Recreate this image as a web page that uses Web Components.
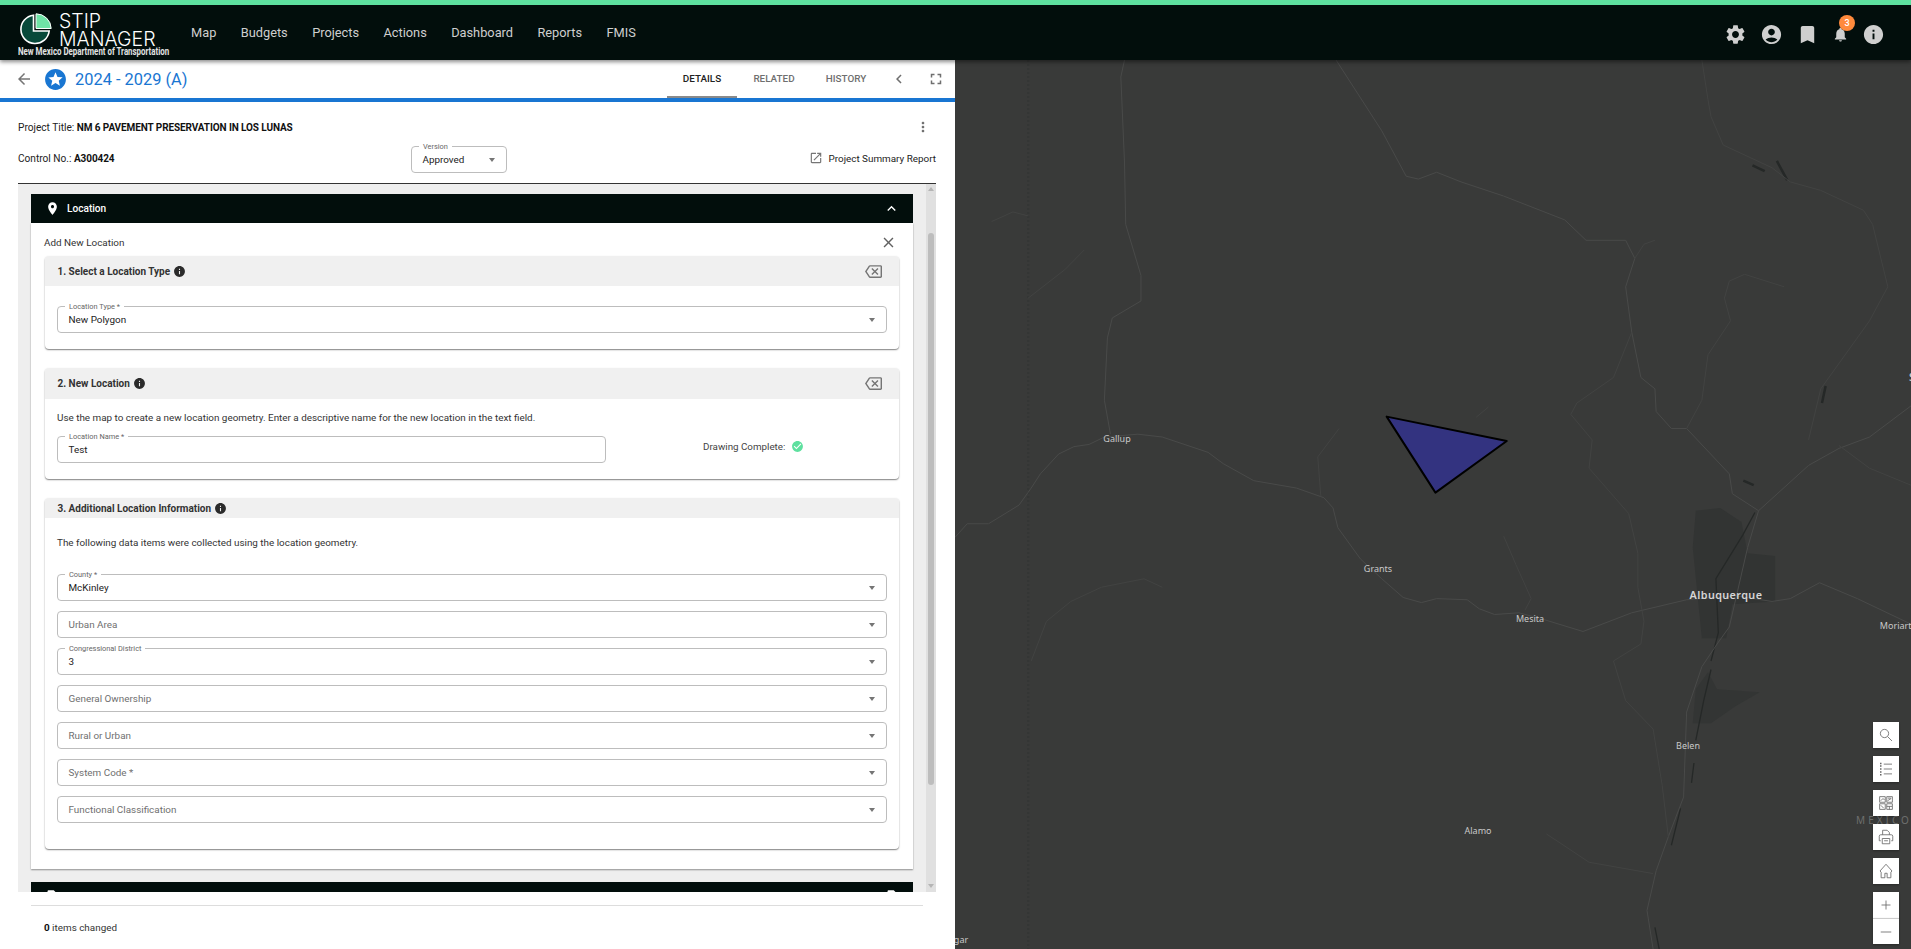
<!DOCTYPE html>
<html>
<head>
<meta charset="utf-8">
<title>STIP Manager</title>
<style>
  html, body { margin: 0; height: 949px; overflow: hidden; background: #fff; }
  body { display: flex; flex-direction: column; font-family: Roboto, "Liberation Sans", sans-serif; }
  .main { display: flex; height: 889px; }
</style>
</head>
<body>
<stip-header></stip-header>
<div class="main">
  <project-panel></project-panel>
  <map-view></map-view>
</div>
<script>
const ICONS = {
  settings: "M19.14 12.94c.04-.3.06-.61.06-.94 0-.32-.02-.64-.07-.94l2.03-1.58c.18-.14.23-.41.12-.61l-1.92-3.32c-.12-.22-.37-.29-.59-.22l-2.39.96c-.5-.38-1.03-.7-1.62-.94l-.36-2.54c-.04-.24-.24-.41-.48-.41h-3.84c-.24 0-.43.17-.47.41l-.36 2.54c-.59.24-1.13.57-1.62.94l-2.39-.96c-.22-.08-.47 0-.59.22L2.74 8.87c-.12.21-.08.47.12.61l2.03 1.58c-.05.3-.09.63-.09.94s.02.64.07.94l-2.03 1.58c-.18.14-.23.41-.12.61l1.92 3.32c.12.22.37.29.59.22l2.39-.96c.5.38 1.03.7 1.62.94l.36 2.54c.05.24.24.41.48.41h3.84c.24 0 .44-.17.47-.41l.36-2.54c.59-.24 1.13-.56 1.62-.94l2.39.96c.22.08.47 0 .59-.22l1.92-3.32c.12-.22.07-.47-.12-.61l-2.01-1.58zM12 15.6c-1.98 0-3.6-1.62-3.6-3.6s1.62-3.6 3.6-3.6 3.6 1.62 3.6 3.6-1.62 3.6-3.6 3.6z",
  account: "M12 2C6.48 2 2 6.48 2 12s4.48 10 10 10 10-4.48 10-10S17.52 2 12 2zm0 4c1.93 0 3.5 1.57 3.5 3.5S13.93 13 12 13s-3.5-1.57-3.5-3.5S10.07 6 12 6zm0 14c-2.03 0-4.43-.82-6.14-2.88C7.55 15.8 9.68 15 12 15s4.45.8 6.14 2.12C16.43 19.18 14.03 20 12 20z",
  bookmark: "M17 3H7c-1.1 0-2 .9-2 2v16l7-3 7 3V5c0-1.1-.9-2-2-2z",
  bell: "M12 22c1.1 0 2-.9 2-2h-4c0 1.1.89 2 2 2zm6-6v-5c0-3.07-1.64-5.64-4.5-6.32V4c0-.83-.67-1.5-1.5-1.5s-1.5.67-1.5 1.5v.68C7.63 5.36 6 7.92 6 11v5l-2 2v1h16v-1l-2-2z",
  info: "M12 2C6.48 2 2 6.48 2 12s4.48 10 10 10 10-4.48 10-10S17.52 2 12 2zm1 15h-2v-6h2v6zm0-8h-2V7h2v2z",
  place: "M12 2C8.13 2 5 5.13 5 9c0 5.25 7 13 7 13s7-7.75 7-13c0-3.87-3.13-7-7-7zm0 9.5c-1.38 0-2.5-1.12-2.5-2.5s1.12-2.5 2.5-2.5 2.5 1.12 2.5 2.5-1.12 2.5-2.5 2.5z",
  back: "M20 11H7.83l5.59-5.59L12 4l-8 8 8 8 1.41-1.41L7.83 13H20v-2z",
  star: "M12 2C6.47 2 2 6.48 2 12s4.47 10 10 10c5.52 0 10-4.48 10-10S17.52 2 12 2zm4.24 16L12 15.45 7.77 18l1.12-4.81-3.73-3.23 4.92-.42L12 5l1.92 4.53 4.92.42-3.73 3.23L16.23 18z",
  chevron: "M15.41 7.41L14 6l-6 6 6 6 1.41-1.41L10.83 12z",
  fullscreen: "M7 14H5v5h5v-2H7v-3zm-2-4h2V7h3V5H5v5zm12 7h-3v2h5v-5h-2v3zM14 5v2h3v3h2V5h-5z",
  more: "M12 8c1.1 0 2-.9 2-2s-.9-2-2-2-2 .9-2 2 .9 2 2 2zm0 2c-1.1 0-2 .9-2 2s.9 2 2 2 2-.9 2-2-.9-2-2-2zm0 6c-1.1 0-2 .9-2 2s.9 2 2 2 2-.9 2-2-.9-2-2-2z",
  open: "M19 19H5V5h7V3H5c-1.11 0-2 .9-2 2v14c0 1.1.89 2 2 2h14c1.1 0 2-.9 2-2v-7h-2v7zM14 3v2h3.59l-9.83 9.83 1.41 1.41L19 6.41V10h2V3h-7z",
  less: "M12 8l-6 6 1.41 1.41L12 10.83l4.59 4.58L18 14z",
  close: "M19 6.41L17.59 5 12 10.59 6.41 5 5 6.41 10.59 12 5 17.59 6.41 19 12 13.41 17.59 19 19 17.59 13.41 12z",
  backspace: "M22 3H7c-.69 0-1.23.35-1.59.88L0 12l5.41 8.11c.36.53.9.89 1.59.89h15c1.1 0 2-.9 2-2V5c0-1.1-.9-2-2-2zm0 16H7.07L2.4 12l4.66-7H22v14zm-11.59-2L14 13.41 17.59 17 19 15.59 15.41 12 19 8.41 17.59 7 14 10.59 10.41 7 9 8.41 12.59 12 9 15.59z",
  check: "M12 2C6.48 2 2 6.48 2 12s4.48 10 10 10 10-4.48 10-10S17.52 2 12 2zm-2 15l-5-5 1.41-1.41L10 14.17l7.59-7.59L19 8l-9 9z",
  file: "M14 2H6c-1.1 0-1.99.9-1.99 2L4 20c0 1.1.89 2 1.99 2H18c1.1 0 2-.9 2-2V8l-6-6z"
};

class AppIcon extends HTMLElement {
  connectedCallback() {
    const size = this.getAttribute("size") || 18;
    this.attachShadow({ mode: "open" }).innerHTML = `
      <style>:host { display: inline-flex; flex: none; line-height: 0; } svg { fill: currentColor; }</style>
      <svg width="${size}" height="${size}" viewBox="0 0 24 24"><path d="${ICONS[this.getAttribute("name")]}"/></svg>`;
  }
}
customElements.define("app-icon", AppIcon);

const headerTpl = document.createElement("template");
headerTpl.innerHTML = `
  <style>
    :host { display: flex; align-items: center; height: 55px; border-top: 5px solid #5ee09f; background: #020e0c; color: #cfcfcf; position: relative; z-index: 3; box-shadow: 0 2px 4px rgba(0,0,0,.45); }
    .logo { width: 173px; margin-left: 18px; flex: none; align-self: stretch; display: flex; flex-direction: column; }
    .brand { display: flex; margin-left: 1px; padding-top: 8px; }
    .brand svg { flex: none; }
    .name { margin-left: 7px; color: #fff; font: 300 19.5px/16px Inter, sans-serif; }
    .name div + div { margin-top: 2px; }
    .sub { color: #e4e4e4; font: 700 10px/9px Roboto, sans-serif; white-space: nowrap; transform: scaleX(.79); transform-origin: left center; }
    nav { display: flex; gap: 24.4px; font: 400 12.8px Roboto, sans-serif; margin-top: -1px; }
    .icons { display: flex; align-items: center; gap: 13px; margin-left: auto; margin-right: 26px; margin-top: 3px; }
    .bell { position: relative; display: inline-flex; width: 20px; justify-content: center; margin: 0 -1px 0 -1.5px; }
    .badge { position: absolute; top: -11px; left: 9px; width: 16px; height: 16px; border-radius: 50%; background: #ff8a3c; color: #fff; font: 500 9px/16px Roboto, sans-serif; text-align: center; }
  </style>
  <div class="logo">
    <div class="brand">
      <svg width="33" height="33" viewBox="0 0 33 33">
        <path d="M14.5 2.2 A14.2 14.2 0 1 0 30.2 18 H14.5 Z" fill="#07493a" stroke="#fff" stroke-width="1.6"/>
        <path d="M17 .8 A15.2 15.2 0 0 1 32.2 15.5 H17 Z" fill="#6fe3a6" stroke="#fff" stroke-width="1"/>
      </svg>
      <div class="name"><div>STIP</div><div>MANAGER</div></div>
    </div>
    <div class="sub">New Mexico Department of Transportation</div>
  </div>
  <nav>
    <span>Map</span><span>Budgets</span><span>Projects</span><span>Actions</span><span>Dashboard</span><span>Reports</span><span>FMIS</span>
  </nav>
  <div class="icons">
    <app-icon name="settings" size="23"></app-icon>
    <app-icon name="account" size="23"></app-icon>
    <app-icon name="bookmark" size="23"></app-icon>
    <span class="bell"><app-icon name="bell" size="17"></app-icon><span class="badge">3</span></span>
    <app-icon name="info" size="23"></app-icon>
  </div>`;
class StipHeader extends HTMLElement {
  constructor() {
    super();
    this.attachShadow({ mode: "open" }).appendChild(headerTpl.content.cloneNode(true));
  }
}
customElements.define("stip-header", StipHeader);

const detailTpl = document.createElement("template");
detailTpl.innerHTML = `
  <style>
    :host { display: flex; align-items: center; height: 38px; flex: none; border-bottom: 4px solid #1976d2; padding: 0 10px 0 15px; }
    .back { color: #757575; }
    .star { color: #1976d2; margin-left: 10px; }
    h1 { margin: 0 0 0 7px; font: 400 16.4px Roboto, sans-serif; color: #1976d2; }
    .tabs { display: flex; margin-left: auto; align-self: stretch; }
    .tab { width: 70px; margin: 0 1px; display: flex; align-items: center; justify-content: center; font: 500 9.9px Roboto, sans-serif; color: #6f6f6f; box-sizing: border-box; border-bottom: 2px solid transparent; padding-top: 1px; }
    .tab.on { color: #222; border-bottom-color: #8a8a8a; }
    .chev { color: #6f6f6f; margin-left: 8px; }
    .full { color: #6f6f6f; margin-left: 19px; }
  </style>
  <app-icon class="back" name="back" size="18"></app-icon>
  <app-icon class="star" name="star" size="25"></app-icon>
  <h1>2024 - 2029 (A)</h1>
  <div class="tabs">
    <div class="tab on">DETAILS</div><div class="tab">RELATED</div><div class="tab">HISTORY</div>
  </div>
  <app-icon class="chev" name="chevron" size="18"></app-icon>
  <app-icon class="full" name="fullscreen" size="18"></app-icon>`;
class DetailBar extends HTMLElement {
  constructor() {
    super();
    this.attachShadow({ mode: "open" }).appendChild(detailTpl.content.cloneNode(true));
  }
}
customElements.define("detail-bar", DetailBar);

const metaTpl = document.createElement("template");
metaTpl.innerHTML = `
  <style>
    :host { display: block; flex: none; height: 81px; box-sizing: border-box; padding: 15px 19px 0 18px; font: 400 10.15px Roboto, sans-serif; color: #222; }
    b { font-weight: 700; font-size: 10px; letter-spacing: -.1px; color: #111; }
    .row1 { display: flex; align-items: center; justify-content: space-between; height: 20px; }
    .row2 { display: grid; grid-template-columns: 393px 96px 1fr; align-items: center; height: 27px; margin-top: 9px; }
    .more { color: #6f6f6f; margin-right: 5px; }
    .report { display: flex; align-items: center; justify-content: flex-end; margin-top: -3px; font-size: 9.9px; }
    .report app-icon { color: #757575; margin-right: 6px; }
    .ctrl { margin-top: -3px; }
  </style>
  <div class="row1">
    <span>Project Title: <b>NM 6 PAVEMENT PRESERVATION IN LOS LUNAS</b></span>
    <app-icon class="more" name="more" size="16"></app-icon>
  </div>
  <div class="row2">
    <span class="ctrl">Control No.: <b>A300424</b></span>
    <md-field label="Version" value="Approved" select></md-field>
    <span class="report"><app-icon name="open" size="14"></app-icon>Project Summary Report</span>
  </div>`;
class ProjectMeta extends HTMLElement {
  constructor() {
    super();
    this.attachShadow({ mode: "open" }).appendChild(metaTpl.content.cloneNode(true));
  }
}
customElements.define("project-meta", ProjectMeta);

// outlined material style field, select attr adds the arrow
class MdField extends HTMLElement {
  connectedCallback() {
    const label = this.getAttribute("label");
    const value = this.getAttribute("value");
    const floated = value !== null;
    this.attachShadow({ mode: "open" }).innerHTML = `
      <style>
        :host { display: block; height: 27px; box-sizing: border-box; position: relative; border: 1px solid #bdbdbd; border-radius: 4px; background: #fff; font: 400 9.9px/25px Roboto, sans-serif; color: #222; padding-left: 10.5px; }
        .label { position: absolute; left: 7px; top: -5px; padding: 0 4px; background: #fff; font-size: 7.4px; line-height: 9px; color: #666; white-space: nowrap; }
        .hint { color: #6f6f6f; }
        .arrow { position: absolute; right: 11px; top: 11px; width: 0; height: 0; border: 3.5px solid transparent; border-top: 4px solid #757575; border-bottom: 0; }
      </style>
      ${floated ? `<span class="label">${label}</span><span>${value}</span>` : `<span class="hint">${label}</span>`}
      ${this.hasAttribute("select") ? `<span class="arrow"></span>` : ""}`;
  }
}
customElements.define("md-field", MdField);

const sectionTpl = document.createElement("template");
sectionTpl.innerHTML = `
  <style>
    :host { display: block; border-radius: 4px; background: #fff; box-shadow: 0 1px 1.5px rgba(0,0,0,.5); overflow: hidden; }
    .head { display: flex; align-items: center; height: var(--head, 30px); background: #f0f0f0; padding: 0 17px 0 12.5px; font: 700 10px Roboto, sans-serif; color: #333; }
    .info { margin-left: 3px; color: #2b2b2b; }
    .clear { margin-left: auto; color: #757575; }
    .body { padding: var(--pad, 20px 12px 16px); }
  </style>
  <div class="head">
    <span class="title"></span>
    <app-icon class="info" name="info" size="13"></app-icon>
  </div>
  <div class="body"><slot></slot></div>`;
class FormSection extends HTMLElement {
  constructor() {
    super();
    this.attachShadow({ mode: "open" }).appendChild(sectionTpl.content.cloneNode(true));
  }
  connectedCallback() {
    this.shadowRoot.querySelector(".title").textContent = this.getAttribute("heading");
    if (this.hasAttribute("clearable")) {
      const clear = document.createElement("app-icon");
      clear.className = "clear";
      clear.setAttribute("name", "backspace");
      clear.setAttribute("size", "17");
      this.shadowRoot.querySelector(".head").appendChild(clear);
    }
  }
}
customElements.define("form-section", FormSection);

class AccordionBar extends HTMLElement {
  connectedCallback() {
    this.attachShadow({ mode: "open" }).innerHTML = `
      <style>
        :host { display: flex; align-items: center; flex: none; height: 29px; background: #020e0c; color: #fff; padding: 0 13px 0 14px; font: 500 10.1px Roboto, sans-serif; }
        .lead { margin-right: 7px; }
        .end { margin-left: auto; }
      </style>
      <app-icon class="lead" size="15" name="${this.getAttribute("icon")}"></app-icon>
      <slot></slot>
      <app-icon class="end" size="${this.getAttribute("end-size") || 17}" name="${this.getAttribute("end")}"></app-icon>`;
  }
}
customElements.define("accordion-bar", AccordionBar);

const panelTpl = document.createElement("template");
panelTpl.innerHTML = `
  <style>
    :host { display: flex; flex-direction: column; width: 955px; flex: none; background: #fff; position: relative; z-index: 2; }
    .scroller { display: flex; height: 709px; flex: none; margin: 0 19px 0 18px; border-top: 1px solid #333; background: #eee; overflow: hidden; box-sizing: border-box; }
    .content { flex: 1; min-width: 0; padding: 10px 13px 0; }
    .card { background: #fff; box-shadow: 0 1px 1.5px rgba(0,0,0,.4); padding: 0 14px 20px; }
    .card-top { display: flex; align-items: center; justify-content: space-between; height: 33px; font: 400 9.9px Roboto, sans-serif; color: #333; padding: 5px 2px 0 0; box-sizing: border-box; margin-left: -1px; }
    .card-top app-icon { color: #616161; }
    form-section + form-section { margin-top: 19px; }
    p { margin: 0; font: 400 9.9px Roboto, sans-serif; color: #333; }
    .s2 p { height: 17px; line-height: 17px; margin-bottom: 10px; }
    .name-row { display: flex; align-items: flex-start; }
    .name-row md-field { width: 549px; }
    .done { display: flex; align-items: center; gap: 6px; margin-left: 97px; margin-top: 4px; font: 400 9.8px Roboto, sans-serif; color: #444; }
    .done app-icon { color: #5ee09f; }
    .s3 p { height: 17px; line-height: 17px; margin-bottom: 23px; }
    .fields { display: flex; flex-direction: column; gap: 10px; }
    .next { margin-top: 13px; }
    .scrollbar { width: 10px; flex: none; background: #e0e0e0; position: relative; }
    .up, .down { position: absolute; left: 2px; width: 0; height: 0; border: 3px solid transparent; }
    .up { top: 3px; border-bottom: 4px solid #b5b5b5; border-top: 0; }
    .down { bottom: 4px; border-top: 4px solid #b5b5b5; border-bottom: 0; }
    .thumb { position: absolute; left: 2px; top: 49px; width: 6px; height: 552px; border-radius: 3px; background: #bdbdbd; }
    .foot { flex: 1; margin: 13px 32px 0 31px; border-top: 1px solid #ddd; padding: 15px 0 0 13px; font: 400 9.9px/14px Roboto, sans-serif; color: #333; }
    .foot b { color: #111; }
  </style>
  <detail-bar></detail-bar>
  <project-meta></project-meta>
  <div class="scroller">
    <div class="content">
      <accordion-bar icon="place" end="less">Location</accordion-bar>
      <div class="card">
        <div class="card-top"><span>Add New Location</span><app-icon name="close" size="17"></app-icon></div>
        <form-section heading="1. Select a Location Type" clearable>
          <md-field label="Location Type *" value="New Polygon" select></md-field>
        </form-section>
        <form-section class="s2" heading="2. New Location" clearable style="--head:31px;--pad:10px 12px 16px">
          <p>Use the map to create a new location geometry. Enter a descriptive name for the new location in the text field.</p>
          <div class="name-row">
            <md-field label="Location Name *" value="Test"></md-field>
            <span class="done">Drawing Complete: <app-icon name="check" size="13"></app-icon></span>
          </div>
        </form-section>
        <form-section class="s3" heading="3. Additional Location Information" style="--head:20px;--pad:16px 12px 26px">
          <p>The following data items were collected using the location geometry.</p>
          <div class="fields">
            <md-field label="County *" value="McKinley" select></md-field>
            <md-field label="Urban Area" select></md-field>
            <md-field label="Congressional District" value="3" select></md-field>
            <md-field label="General Ownership" select></md-field>
            <md-field label="Rural or Urban" select></md-field>
            <md-field label="System Code *" select></md-field>
            <md-field label="Functional Classification" select></md-field>
          </div>
        </form-section>
      </div>
      <accordion-bar class="next" icon="file" end="file" end-size="15"></accordion-bar>
    </div>
    <div class="scrollbar"><span class="up"></span><span class="thumb"></span><span class="down"></span></div>
  </div>
  <div class="foot"><b>0</b> items changed</div>`;
class ProjectPanel extends HTMLElement {
  constructor() {
    super();
    this.attachShadow({ mode: "open" }).appendChild(panelTpl.content.cloneNode(true));
  }
}
customElements.define("project-panel", ProjectPanel);

const CTRL_ICONS = {
  search: `<circle cx="10" cy="10" r="5.5"/><path d="M14 14l6 6"/>`,
  list: `<path d="M9 5.5h11M9 12h11M9 18.5h11"/><path d="M4 3.5h2v2H4zM4 7h2v2H4zM4 11h2v2H4zM4 15h2v2H4zM4 18.5h2v2H4z" fill="#666" stroke="none"/>`,
  gallery: `<path d="M3.5 3.5h7.5v7.5H3.5zM13 3.5h7.5v7.5H13zM3.5 13h7.5v7.5H3.5zM13 13h7.5v7.5H13z"/><path d="M5 9l3-3 2 2M14.5 5.5h4M14 9l5-3M5 15l4 4M13 16.500h7M16.500 16.500v4"/>`,
  print: `<path d="M7.500 9V3h6l3 3v3M5 17H3v-6a2 2 0 0 1 2-2h14a2 2 0 0 1 2 2v6h-2"/><path d="M7 14h10v7H7zM9.500 17h5"/>`,
  home: `<path d="M4 12l8-9 8 9-1.500 1.500V21h-5v-6h-3v6h-5v-7.500z"/>`,
  plus: `<path d="M12 6v12M6 12h12"/>`,
  minus: `<path d="M5 12h14"/>`
};
class MapControl extends HTMLElement {
  connectedCallback() {
    this.attachShadow({ mode: "open" }).innerHTML = `
      <style>
        :host { display: flex; align-items: center; justify-content: center; width: 26px; height: 26px; background: #fff; }
        svg { fill: none; stroke: #666; stroke-width: 1.1; }
      </style>
      <svg width="18" height="18" viewBox="0 0 24 24">${CTRL_ICONS[this.getAttribute("icon")]}</svg>`;
  }
}
customElements.define("map-control", MapControl);

const mapTpl = document.createElement("template");
mapTpl.innerHTML = `
  <style>
    :host { display: block; flex: 1; position: relative; overflow: hidden; background: #393a39; }
    svg.base { position: absolute; inset: 0; width: 100%; height: 100%; }
    .road { fill: none; stroke: #494a49; stroke-width: 1; vector-effect: non-scaling-stroke; }
    .river { fill: none; stroke: #424342; stroke-width: 1; vector-effect: non-scaling-stroke; }
    .water { fill: none; stroke: #252827; stroke-width: 1.3; vector-effect: non-scaling-stroke; }
    .state { fill: none; stroke: #343635; stroke-width: 2; stroke-dasharray: 2 2; vector-effect: non-scaling-stroke; }
    .poly { fill: #333380; stroke: #000; stroke-width: 2; stroke-linejoin: round; vector-effect: non-scaling-stroke; }
    .place { position: absolute; transform: translate(-50%, -50%); font: 400 9px "Noto Sans", sans-serif; color: #c9c9c9; white-space: nowrap; }
    .big { font-size: 10.8px; font-weight: 600; letter-spacing: .4px; color: #d6d6d6; }
    .region { color: #6e6f6e; letter-spacing: 3px; font-size: 10px; }
    .edge { transform: translateY(-50%); font-size: 11px; font-weight: 600; }
    .controls { position: absolute; top: 662px; right: 12px; display: flex; flex-direction: column; gap: 8px; }
    .zoom { display: flex; flex-direction: column; gap: 0; }
    .zoom map-control + map-control { border-top: 1px solid #ccc; height: 25px; }
    map-control { box-shadow: 0 1px 2px rgba(0,0,0,.3); }
  </style>
  <svg class="base" viewBox="0 0 1568 1568" preserveAspectRatio="none">
    <path d="M1215 795L1255 790 1290 815 1300 870 1345 875 1345 955 1275 960 1265 1020 1225 1020 1210 860Z" fill="#323433"/>
    <path d="M1235 1080L1250 1110 1320 1115 1280 1140 1240 1170 1210 1170 1215 1110Z" fill="#333534"/>
    <path d="M120 0V1568" class="state"/>
    <path class="water" d="M1312 798L1292 838 1248 915 1252 1010 1240 1060M1240 1075L1228 1130 1215 1200M1212 1240L1208 1275M1190 1320L1175 1385M1148 1530L1155 1568"/>
    <path class="water" style="stroke-width:2.500" d="M1348 178L1365 212M1308 186L1328 196M1428 575L1422 605M1293 742L1310 750"/>
    <path class="road" d="M0 842L20 818 55 818 105 785 125 755 140 730 170 695 195 682 220 678 245 665 300 660 340 665 415 692 440 712 490 742 560 755 605 772 620 790 628 825 665 880 700 915 735 948 765 957 790 950 840 952 860 968 885 978 925 975 960 985 1030 1008 1110 975 1200 952 1280 945 1340 955 1370 950 1418 922 1480 950 1568 995"/>
    <path class="road" d="M1318 795L1300 860 1270 1000 1250 1030 1225 1070 1200 1150 1195 1300 1170 1370 1150 1430 1135 1500 1145 1568"/>
    <path class="road" d="M1318 795L1400 715 1450 685 1500 665 1568 610"/>
    <path class="road" d="M255 660L245 600 250 490 258 455 305 425 305 380 280 290 278 180 272 30 278 0"/>
    <path class="road" d="M625 0L700 125 740 205 760 210 790 198 830 215 900 240 1000 282 1035 318 1100 318 1115 350 1100 400 1110 480 1125 560 1148 580 1150 620 1175 650 1200 650 1270 730 1275 765 1318 795"/>
    <path class="river" d="M1110 480L1080 560 1020 605 1010 625 1045 670 1040 720 1105 800 1120 870 1120 930 1130 990 1125 1030 1080 1060 1100 1130 1145 1180 1160 1280 1170 1370"/>
    <path class="river" d="M1200 650L1225 600 1235 520 1272 460 1262 420 1270 390 1295 378 1360 400"/>
    <path class="river" d="M1400 670L1420 580 1500 460 1530 400 1505 290 1490 265 1420 230 1370 215 1340 190 1260 150 1240 100 1235 70 1225 0"/>
    <path class="river" d="M120 420L180 370 212 335M60 285L95 268 120 275M125 1060L150 990 190 955 240 930 310 915 340 930"/>
    <path class="river" d="M600 770L595 700 630 650M900 840L920 890 945 950 935 970M970 1365L1040 1415 1145 1435M855 630L875 612"/>
    <path class="river" d="M1450 680L1500 720 1568 750M1115 350L1130 325 1148 318"/>
    <path class="poly" d="M708 629L905 672 788 763Z"/>
  </svg>
  <span class="place" style="left:162px;top:378px">Gallup</span>
  <span class="place" style="left:423px;top:508px">Grants</span>
  <span class="place" style="left:575px;top:558px">Mesita</span>
  <span class="place big" style="left:771px;top:534px">Albuquerque</span>
  <span class="place" style="left:943px;top:565px">Moriarty</span>
  <span class="place" style="left:733px;top:685px">Belen</span>
  <span class="place" style="left:523px;top:770px">Alamo</span>
  <span class="place" style="left:6px;top:879px">gar</span>
  <span class="place region" style="left:929px;top:760px">MEXICO</span>
  <span class="place region" style="left:927px;top:747px">N</span>
  <span class="place edge" style="left:954px;top:316px">S</span>
  <div class="controls">
    <map-control icon="search"></map-control>
    <map-control icon="list"></map-control>
    <map-control icon="gallery"></map-control>
    <map-control icon="print"></map-control>
    <map-control icon="home"></map-control>
    <div class="zoom"><map-control icon="plus"></map-control><map-control icon="minus"></map-control></div>
  </div>`;
class MapView extends HTMLElement {
  constructor() {
    super();
    this.attachShadow({ mode: "open" }).appendChild(mapTpl.content.cloneNode(true));
  }
}
customElements.define("map-view", MapView);
</script>
</body>
</html>
